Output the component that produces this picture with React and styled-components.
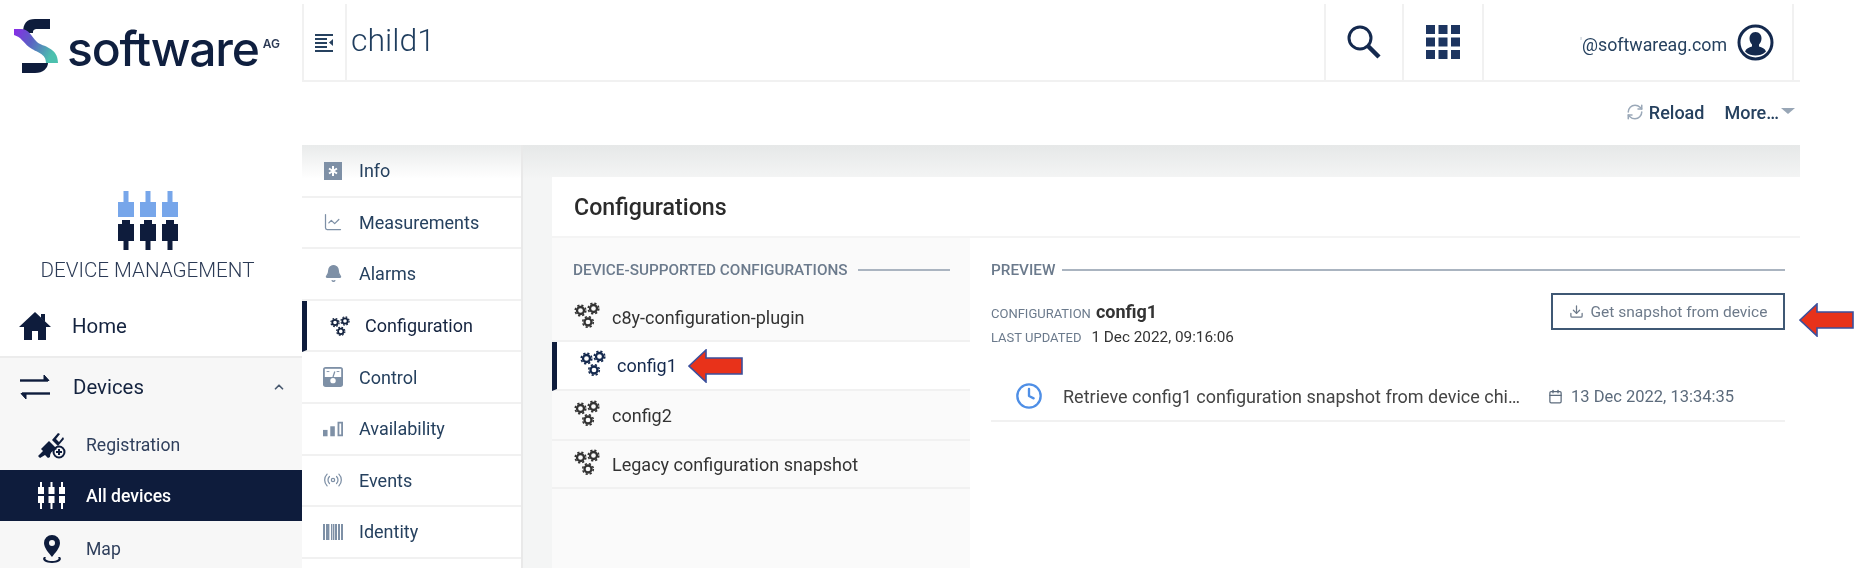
import React from "react";
import styled, { createGlobalStyle } from "styled-components";
import { RefreshCw, Download, Calendar, ChevronUp, LineChart, Bell, Radio, Clock } from "lucide-react";

const Global = createGlobalStyle`
  html, body { margin: 0; padding: 0; background: #fff; }
  body { font-family: Roboto, "Liberation Sans", sans-serif; color: #14233f; overflow: hidden; }
  * { box-sizing: border-box; }
`;

const Page = styled.div`
  position: relative;
  display: flex;
  width: 1868px;
  height: 568px;
  overflow: hidden;
  filter: blur(0.35px);
`;

const Sidebar = styled.aside`
  width: 302px;
  flex: none;
  display: flex;
  flex-direction: column;
  & > * {
    flex: none;
  }
`;
const LogoBar = styled.div`
  height: 81px;
  display: flex;
  align-items: center;
  padding: 10px 0 0 13px;
  color: #0f1f3f;
`;
const LogoWord = styled.span`
  font-family: Inter, sans-serif;
  font-weight: 500;
  font-size: 48px;
  letter-spacing: -1.2px;
  line-height: 1;
  margin-left: 8px;
  margin-top: 6px;
`;
const LogoSup = styled.sup`
  font-family: Inter, sans-serif;
  font-weight: 600;
  font-size: 12px;
  margin: -4px 0 0 4px;
  align-self: center;
  color: #2c3a55;
`;
const Brand = styled.div`
  height: 215px;
  padding: 110px 7px 0 0;
  display: flex;
  flex-direction: column;
  align-items: center;
`;
const BrandName = styled.div`
  margin-top: 8px;
  font-size: 20.6px;
  font-weight: 300;
  color: #2b3a55;
  white-space: nowrap;
`;
const HomeRow = styled.div`
  height: 62px;
  display: flex;
  align-items: center;
  gap: 21px;
  padding: 0 0 0 19px;
  font-size: 20.4px;
  color: #14233f;
  border-bottom: 2px solid #ececec;
`;
const DevicesRow = styled(HomeRow)`
  height: 61px;
  background: #f7f7f7;
  border-bottom: 0;
  padding: 0 16px 4px 20px;
  gap: 23px;
`;
const Grow = styled.span`
  flex: 1;
`;
const SubRow = styled.div`
  height: ${(p) => p.$h || 51}px;
  display: flex;
  align-items: center;
  gap: 20px;
  padding-left: 38px;
  font-size: 17.6px;
  color: ${(p) => (p.$active ? "#fff" : "#2f3f5c")};
  background: ${(p) => (p.$active ? "#0e1c3c" : "#f7f7f7")};
  font-weight: ${(p) => (p.$active ? 500 : 400)};
`;
const SubIcon = styled.span`
  width: 28px;
  display: flex;
  justify-content: center;
`;

const Main = styled.main`
  width: 1498px;
  flex: none;
  display: flex;
  flex-direction: column;
`;
const TopBar = styled.header`
  height: 82px;
  flex: none;
  padding-top: 4px;
  display: flex;
  border-bottom: 2px solid #f1f1f1;
  padding-right: 6px;
`;
const TopCell = styled.div`
  flex: none;
  width: ${(p) => p.$w}px;
  display: flex;
  align-items: center;
  justify-content: center;
  border-left: 2px solid #f1f1f1;
`;
const Title = styled.h1`
  flex: 1;
  margin: 0;
  padding: 0 0 4px 4px;
  display: flex;
  align-items: center;
  font-weight: 300;
  font-size: 32px;
  color: #1f3d5e;
  border-left: 2px solid #f1f1f1;
`;
const UserCell = styled(TopCell)`
  justify-content: flex-end;
  gap: 10px;
  padding-right: 18px;
  border-right: 2px solid #f1f1f1;
  font-size: 17.8px;
  color: #26415f;
`;
const UserMail = styled.span`
  margin-top: 4px;
`;
const Faint = styled.span`
  color: #b5bfca;
  font-size: 12px;
  vertical-align: 4px;
`;
const ActionBar = styled.div`
  height: 63px;
  flex: none;
  display: flex;
  align-items: center;
  justify-content: flex-end;
  padding: 0 9px 3px 0;
  gap: 20px;
  font-size: 18px;
  font-weight: 500;
  color: #26415f;
`;
const Action = styled.span`
  display: flex;
  align-items: center;
  gap: 5px;
`;
const Caret = styled.span`
  width: 0;
  height: 0;
  border-left: 7px solid transparent;
  border-right: 7px solid transparent;
  border-top: 6px solid #98a6b6;
  margin: 0 -4px 3px -3px;
`;
const Body = styled.div`
  flex: 1;
  display: flex;
  min-height: 0;
`;
const Tabs = styled.nav`
  width: 221px;
  flex: none;
  border-right: 2px solid #e9e9e9;
  background: linear-gradient(#e9ebeb 0, #ffffff 34px);
  padding-top: 1px;
`;
const Tab = styled.div`
  height: 51.6px;
  display: flex;
  align-items: center;
  gap: ${(p) => (p.$active ? 15 : 16)}px;
  padding-left: ${(p) => (p.$active ? 23 : 21)}px;
  font-size: 18px;
  color: ${(p) => (p.$active ? "#14233f" : "#26415f")};
  border-bottom: 2px solid #f1f1f1;
  border-left: ${(p) => (p.$active ? "5px solid #0e1c3c" : "0")};
`;
const TabIcon = styled.span`
  width: 20px;
  height: 22px;
  display: flex;
  align-items: center;
  justify-content: center;
  color: #7e90a6;
`;
const Content = styled.section`
  flex: 1;
  background: linear-gradient(#e6e8e8 0, #f4f5f5 34px);
  padding: 32px 0 0 29px;
`;
const Card = styled.div`
  height: 400px;
  background: #fff;
  display: flex;
  flex-direction: column;
`;
const CardHead = styled.div`
  height: 61px;
  flex: none;
  display: flex;
  align-items: center;
  padding-left: 22px;
  font-size: 23.2px;
  font-weight: 500;
  color: #2b2b2b;
  border-bottom: 2px solid #f4f4f4;
`;
const Columns = styled.div`
  flex: 1;
  display: flex;
`;
const ListCol = styled.div`
  width: 418px;
  flex: none;
  background: #fafafa;
`;
const SectionTitle = styled.div`
  height: 56px;
  padding: 8px ${(p) => p.$pr || 0}px 0 ${(p) => p.$pl || 21}px;
  display: flex;
  align-items: center;
  gap: ${(p) => p.$gap || 10}px;
  font-size: 15.3px;
  font-weight: 500;
  color: #6b7a8c;
  white-space: nowrap;
  &::after {
    content: "";
    flex: 1;
    height: 2px;
    background: #aab4c0;
  }
`;
const ConfigRow = styled.div`
  height: ${(p) => p.$h}px;
  display: flex;
  align-items: center;
  gap: ${(p) => (p.$active ? 11 : 12)}px;
  padding-left: ${(p) => (p.$active ? 23 : 22)}px;
  font-size: 18px;
  color: ${(p) => (p.$active ? "#14294e" : "#333")};
  background: ${(p) => (p.$active ? "#fff" : "transparent")};
  border-bottom: 2px solid #f1f1f1;
  border-left: ${(p) => (p.$active ? "5px solid #0e1c3c" : "0")};
`;
const GearSlot = styled.span`
  display: flex;
  margin-top: -5px;
`;
const PreviewCol = styled.div`
  flex: 1;
  padding: 0 15px 0 20px;
`;
const PreviewHead = styled.div`
  display: flex;
  justify-content: space-between;
  margin: -1px 0 0 1px;
`;
const Meta = styled.div`
  padding-top: 8px;
`;
const MetaLine = styled.div`
  display: flex;
  align-items: baseline;
  gap: 5px;
  height: 27px;
  font-size: 15.3px;
  color: #333;
`;
const MetaLabel = styled.span`
  font-size: 13px;
  color: #6b7a8c;
  margin-right: ${(p) => p.$mr || 0}px;
`;
const MetaValue = styled.span`
  font-weight: ${(p) => (p.$bold ? 700 : 400)};
  font-size: ${(p) => (p.$bold ? 18 : 15.3)}px;
`;
const SnapshotButton = styled.div`
  width: 234px;
  height: 37px;
  display: flex;
  align-items: center;
  justify-content: center;
  gap: 7px;
  border: 2px solid #3f5874;
  font-size: 15.5px;
  color: #6d7a8a;
`;
const TaskRow = styled.div`
  height: 50px;
  margin: 17px 0 0 1px;
  display: flex;
  align-items: center;
  padding-left: 24px;
  border-bottom: 2px solid #f1f1f1;
  font-size: 18px;
  color: #444;
`;
const TaskName = styled.span`
  width: 459px;
  margin-left: 20px;
  white-space: nowrap;
  overflow: hidden;
  text-overflow: ellipsis;
`;
const TaskDate = styled.span`
  display: flex;
  align-items: center;
  gap: 8px;
  margin-left: 26px;
  font-size: 16.5px;
  color: #5c6b7c;
`;
const ArrowMark = styled.svg`
  position: absolute;
  left: ${(p) => p.$x}px;
  top: ${(p) => p.$y}px;
`;

const Gears = ({ size = 26, color = "currentColor" }) => {
  const gear = (cx, cy, k) => (
    <g key={k} fill="none" stroke={color}>
      <circle cx={cx} cy={cy} r="3.5" strokeWidth="2.3" />
      <circle cx={cx} cy={cy} r="5.3" strokeWidth="1.6" strokeDasharray="2.2 2" />
    </g>
  );
  return (
    <svg width={size} height={size} viewBox="0 0 26 26">
      {gear(6.5, 8.5, "a")}
      {gear(19.5, 6.5, "b")}
      {gear(14, 20, "c")}
    </svg>
  );
};

const DeviceLogo = () => (
  <svg width="60" height="59" viewBox="0 0 60 59" style={{ display: "block" }}>
    {[0, 22, 44].map((d) => (
      <g key={d}>
        <path d={`M${d + 5.5} 0h5v11h5.5v15h-16v-15h5.5z`} fill="#77a6ea" />
        <path d={`M${d} 33h4v-4h8v4h4v17h-5.5v9h-5v-9h-5.5z`} fill="#0e1c3c" />
      </g>
    ))}
  </svg>
);

const SLogo = () => (
  <svg width="46" height="56" viewBox="0 0 46 56">
    <defs>
      <linearGradient id="sg" x1="0" y1="0" x2="1" y2="0.4">
        <stop offset="0" stopColor="#8a2be8" />
        <stop offset="0.45" stopColor="#5a5fc4" />
        <stop offset="1" stopColor="#4cc0ae" />
      </linearGradient>
    </defs>
    <path d="M10 15 C10 5 14 1 22 1 H37 V11 H25 C20 11 20 13 20 15 Z" fill="#0e1c3c" />
    <path d="M1 11 H8 C16 11 18 18 24 24 C30 29 45 29 45 45 H33 C33 35 24 35 16 29 C10 24 8 19 1 17 Z" fill="url(#sg)" />
    <path d="M9 45 H35 C35 50 30 55 22 55 H9 Z" fill="#0e1c3c" />
  </svg>
);

const HomeIcon = () => (
  <svg width="32" height="28" viewBox="0 0 32 28" fill="#0e1c3c">
    <path d="M16 0 L32 15 H27 V28 H19 V19 H13 V28 H5 V15 H0 L16 0 Z" />
    <path d="M22 2h4v8l-4-4z" />
  </svg>
);

const SearchIcon = () => (
  <svg width="36" height="36" viewBox="0 0 36 36" fill="none" stroke="#14294e">
    <circle cx="14" cy="14" r="11" strokeWidth="3" />
    <path d="M22 22 L33 33" strokeWidth="4.5" />
  </svg>
);

const DevicesIcon = () => (
  <svg width="30" height="26" viewBox="0 0 30 26" fill="none" stroke="#0e1c3c" strokeWidth="2.4">
    <path d="M0 6.5h28" />
    <path d="M24 1l5 5.5h-5z" fill="#0e1c3c" strokeWidth="1" />
    <path d="M2 19.5h28" />
    <path d="M6 25l-5-5.5h5z" fill="#0e1c3c" strokeWidth="1" />
  </svg>
);

const AllDevicesIcon = () => (
  <svg width="28" height="27" viewBox="0 0 28 27" fill="#fff">
    {[3, 13.5, 24].map((x) => (
      <g key={x}>
        <rect x={x - 1} y="0" width="2" height="6" />
        <rect x={x - 3} y="5" width="6" height="7" />
        <rect x={x - 3} y="14" width="6" height="7" />
        <rect x={x - 1} y="20" width="2" height="7" />
      </g>
    ))}
  </svg>
);

const RegistrationIcon = () => (
  <svg width="28" height="28" viewBox="0 0 28 28" fill="#0e1c3c">
    <path d="M0 25l5-5-2-2 8-8 8 8-2 1a7 7 0 0 0-5 7l-2 1-3-3-5 3z" />
    <path d="M14 9l6-7 2 1-4 5 3 3 4-5 1 2-6 7z" />
    <circle cx="21" cy="21" r="5.5" fill="none" stroke="#0e1c3c" strokeWidth="2" />
    <path d="M18 20h6v2h-6zM20 18h2v6h-2z" />
  </svg>
);

const MapPin = () => (
  <svg width="22" height="28" viewBox="0 0 22 28" fill="#0e1c3c">
    <path fillRule="evenodd" d="M11 0a8 8 0 0 1 8 8c0 5-5 10-8 14-3-4-8-9-8-14a8 8 0 0 1 8-8zm0 5a3 3 0 1 0 0 6 3 3 0 0 0 0-6z" />
    <path d="M3 22c-3 3 2 6 8 6s11-3 8-6l-2 0c2 2-1 4-6 4s-8-2-6-4z" />
  </svg>
);

const InfoIcon = () => (
  <svg width="18" height="18" viewBox="0 0 18 18">
    <rect width="18" height="18" fill="#7e90a6" />
    <path d="M9 4v10M5 6.5l8 5M13 6.5l-8 5" stroke="#fff" strokeWidth="2" />
  </svg>
);
const ControlIcon = () => (
  <svg width="22" height="22" viewBox="0 0 22 22">
    <rect width="22" height="22" rx="3" fill="#7e90a6" />
    <rect x="2" y="2" width="18" height="9" fill="#fff" />
    <path d="M11 11l2-6" stroke="#7e90a6" strokeWidth="1.4" />
    <path d="M4 5h3M15 5h3" stroke="#7e90a6" strokeWidth="1" />
    <circle cx="11" cy="15" r="3" fill="#fff" />
  </svg>
);
const AvailabilityIcon = () => (
  <svg width="22" height="16" viewBox="0 0 22 16" fill="#7e90a6">
    <rect x="0" y="9" width="5" height="7" />
    <rect x="8" y="5" width="5" height="11" />
    <path fillRule="evenodd" d="M16 0h6v16h-6zM18 2v12h2V2z" />
  </svg>
);
const BarcodeIcon = () => (
  <svg width="20" height="16" viewBox="0 0 20 16" fill="#7e90a6">
    {[0, 3, 5, 8, 10, 12, 15, 18].map((x) => (
      <rect key={x} x={x} width={x % 3 === 0 ? 2 : 1.4} height="16" />
    ))}
  </svg>
);
const ToggleIcon = () => (
  <svg width="19" height="19" viewBox="0 0 19 19" fill="#26415f">
    <rect x="0" y="1" width="18" height="2" />
    <rect x="0" y="5" width="12" height="2" />
    <rect x="0" y="9" width="12" height="2" />
    <rect x="0" y="13" width="12" height="2" />
    <rect x="0" y="17" width="18" height="2" />
    <path d="M18 6v7l-4-3.5z" />
  </svg>
);
const AppsIcon = () => (
  <svg width="34" height="34" viewBox="0 0 34 34" fill="#1d3560">
    {[0, 12.5, 25].map((y) =>
      [0, 12.5, 25].map((x) => <rect key={`${x}-${y}`} x={x} y={y} width="9" height="9" />)
    )}
  </svg>
);
const UserIcon = () => (
  <svg width="37" height="37" viewBox="0 0 37 37">
    <circle cx="18.5" cy="18.5" r="16.5" fill="#fff" stroke="#14294e" strokeWidth="3" />
    <path d="M18.5 8c4 0 6 3 6 6.5 0 3-1.5 5-2.5 6v2c3 1 6 2 7 5-3 3-7 4-10.5 4s-7.5-1-10.5-4c1-3 4-4 7-5v-2c-1-1-2.5-3-2.5-6C12.500 11 14.500 8 18.500 8z" fill="#14294e" />
  </svg>
);
const Arrow = ({ x, y }) => (
  <ArrowMark $x={x} $y={y} width="56" height="34" viewBox="0 0 56 34">
    <path d="M1 17 L18 1 V9 H54 V25 H18 V33 Z" fill="#e8321a" stroke="#3b4f9c" strokeWidth="1.6" />
  </ArrowMark>
);

const tabs = [
  ["Info", <InfoIcon />],
  ["Measurements", <LineChart size={20} strokeWidth={1.5} />],
  ["Alarms", <Bell size={19} fill="#7e90a6" strokeWidth={1.5} />],
  ["Configuration", <Gears size={24} color="#14233f" />, true],
  ["Control", <ControlIcon />],
  ["Availability", <AvailabilityIcon />],
  ["Events", <Radio size={22} strokeWidth={1.5} />],
  ["Identity", <BarcodeIcon />],
];

const configs = [
  ["c8y-configuration-plugin", 48.4],
  ["config1", 49, true],
  ["config2", 50],
  ["Legacy configuration snapshot", 48],
];

export default function App() {
  return (
    <Page>
      <Global />
      <Sidebar>
        <LogoBar>
          <SLogo />
          <LogoWord>software</LogoWord>
          <LogoSup>AG</LogoSup>
        </LogoBar>
        <Brand>
          <DeviceLogo />
          <BrandName>DEVICE MANAGEMENT</BrandName>
        </Brand>
        <HomeRow>
          <HomeIcon />
          Home
        </HomeRow>
        <DevicesRow>
          <DevicesIcon />
          Devices
          <Grow />
          <ChevronUp size={14} strokeWidth={3} color="#4a5a70" />
        </DevicesRow>
        <SubRow>
          <SubIcon>
            <RegistrationIcon />
          </SubIcon>
          Registration
        </SubRow>
        <SubRow $active>
          <SubIcon>
            <AllDevicesIcon />
          </SubIcon>
          All devices
        </SubRow>
        <SubRow $h={56}>
          <SubIcon>
            <MapPin />
          </SubIcon>
          Map
        </SubRow>
      </Sidebar>
      <Main>
        <TopBar>
          <TopCell $w={43}>
            <ToggleIcon />
          </TopCell>
          <Title>child1</Title>
          <TopCell $w={78}>
            <SearchIcon />
          </TopCell>
          <TopCell $w={80}>
            <AppsIcon />
          </TopCell>
          <UserCell $w={312}>
            <UserMail>
              <Faint>'</Faint>@softwareag.com
            </UserMail>
            <UserIcon />
          </UserCell>
        </TopBar>
        <ActionBar>
          <Action>
            <RefreshCw size={18} color="#9aa8b8" />
            Reload
          </Action>
          <Action>
            More…
            <Caret />
          </Action>
        </ActionBar>
        <Body>
          <Tabs>
            {tabs.map(([name, icon, active]) => (
              <Tab key={name} $active={active}>
                <TabIcon>{icon}</TabIcon>
                {name}
              </Tab>
            ))}
          </Tabs>
          <Content>
            <Card>
              <CardHead>Configurations</CardHead>
              <Columns>
                <ListCol>
                  <SectionTitle $pr={20}>DEVICE-SUPPORTED CONFIGURATIONS</SectionTitle>
                  {configs.map(([name, height, active]) => (
                    <ConfigRow key={name} $h={height} $active={active}>
                      <GearSlot>
                        <Gears color={active ? "#14294e" : "#333"} />
                      </GearSlot>
                      {name}
                    </ConfigRow>
                  ))}
                </ListCol>
                <PreviewCol>
                  <SectionTitle $pl={1} $gap={7}>PREVIEW</SectionTitle>
                  <PreviewHead>
                    <Meta>
                      <MetaLine>
                        <MetaLabel>CONFIGURATION</MetaLabel>
                        <MetaValue $bold>config1</MetaValue>
                      </MetaLine>
                      <MetaLine>
                        <MetaLabel $mr={5}>LAST UPDATED</MetaLabel>
                        <MetaValue>1 Dec 2022, 09:16:06</MetaValue>
                      </MetaLine>
                    </Meta>
                    <SnapshotButton>
                      <Download size={15} />
                      Get snapshot from device
                    </SnapshotButton>
                  </PreviewHead>
                  <TaskRow>
                    <Clock size={28} color="#4f8fe6" strokeWidth={2} />
                    <TaskName>Retrieve config1 configuration snapshot from device child1</TaskName>
                    <TaskDate>
                      <Calendar size={15} />
                      13 Dec 2022, 13:34:35
                    </TaskDate>
                  </TaskRow>
                </PreviewCol>
              </Columns>
            </Card>
          </Content>
        </Body>
      </Main>
      <Arrow x={688} y={349} />
      <Arrow x={1799} y={303} />
    </Page>
  );
}
